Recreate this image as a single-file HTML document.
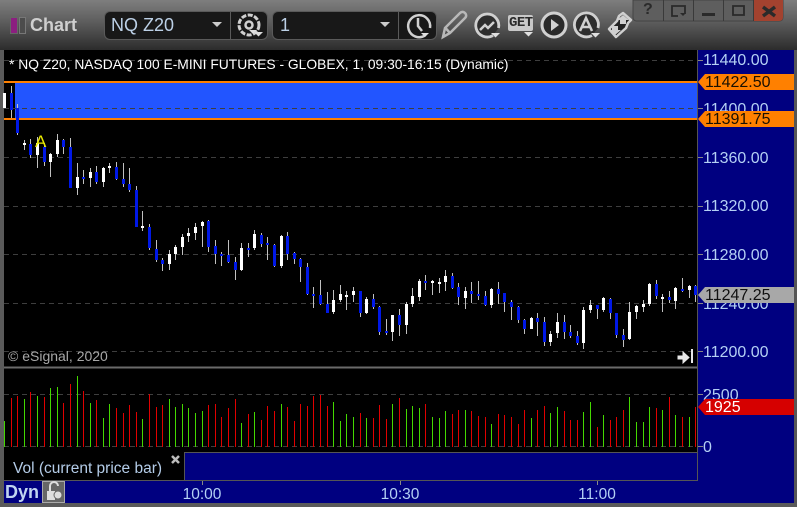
<!DOCTYPE html>
<html><head><meta charset="utf-8"><style>
html,body{margin:0;padding:0;background:#555;width:797px;height:507px;overflow:hidden}
body{position:relative;font-family:"Liberation Sans",sans-serif}
div{position:absolute;white-space:nowrap}
.ax{left:703px;color:#b4d0f4;font-size:16px;line-height:18px}
.tag{left:705px;font-size:16px;line-height:16px}
.tm{color:#b4d0f4;font-size:15.500px;line-height:18px;top:486px;width:60px;text-align:center}
</style></head><body>
<div style="left:0;top:0;width:797px;height:50px;background:linear-gradient(#7e7e7e,#5c5c5c 45%,#2c2c2c)"></div>
<div style="left:0;top:50px;width:4px;height:457px;background:#5a5a5a"></div>
<div style="left:4px;top:50px;width:693px;height:318px;background:#000"></div>
<div style="left:4px;top:368px;width:693px;height:84px;background:#000"></div>
<div style="left:698px;top:50px;width:96px;height:453px;background:#000080"></div>
<div style="left:4px;top:452px;width:181px;height:28px;background:#000"></div>
<div style="left:185px;top:452px;width:513px;height:28px;background:#000080"></div>
<div style="left:4px;top:481px;width:694px;height:22px;background:#000080"></div>
<div style="left:0;top:503px;width:797px;height:4px;background:#5a5a5a"></div>
<div style="left:10px;top:17px;width:6px;height:15px;background:#8c1f80;border:1px solid #666"></div>
<div style="left:19px;top:17px;width:5px;height:15px;background:#4c4c4c;border:1px solid #777"></div>
<div style="left:30px;top:15px;color:#cfcfcf;font-size:18px;font-weight:bold;line-height:20px">Chart</div>
<div style="left:104px;top:11px;width:162px;height:27px;background:#181818;border:1px solid #5a5a5a;border-radius:6px"></div>
<div style="left:272px;top:11px;width:163px;height:27px;background:#181818;border:1px solid #5a5a5a;border-radius:6px"></div>
<div style="left:111px;top:16px;color:#bcd0e6;font-size:18px;line-height:19px">NQ Z20</div>
<div style="left:280px;top:16px;color:#bcd0e6;font-size:18px;line-height:19px">1</div>
<svg width="797" height="507" style="position:absolute;left:0;top:0">
<path d="M230.500 11V39M398.500 11V39" stroke="#5a5a5a"/>
<path d="M212 22h10l-5 5zM380 22h10l-5 5z" fill="#ccc"/>
<g fill="none" stroke="#d0d0d0">
<circle cx="249" cy="25" r="10" stroke-width="3" stroke-dasharray="5 1.500"/><circle cx="249" cy="25" r="3.500" stroke-width="2.500"/>
<path d="M425 35.500A11 11 0 1 1 430 28" stroke-width="2.500"/><path d="M418 18v8l4 5" stroke-width="2.500"/>
<path d="M443 37l2-9 15-15c2-2 4-1 5 0s2 3 0 5L450 33zM445.500 28l4.500 5" stroke="#b8b8b8" stroke-width="2.500"/>
<path d="M493 35.500A11.500 11.500 0 1 1 498.500 28" fill="#2e2e2e" stroke-width="2.800"/><path d="M480 30l5-5 3 3 6-6" stroke-width="2.500"/>
<circle cx="554" cy="25" r="12" fill="#2a2a2a" stroke-width="3"/>
<path d="M592 35.500A12 12 0 1 1 598 28" fill="#2e2e2e" stroke-width="2.800"/><path d="M580 31l6-13 6 13M582.500 27h7" stroke-width="2.500"/>
</g>
<path d="M249 30h8l-4 4zM421 33h8l-4 4zM491 33h9l-4.500 4.500zM524 32h9l-4.500 4.500zM591 33h9l-4.500 4.500z" fill="#e0e0e0"/>
<path d="M254 32h9l-4.500 4.500z" fill="#ddd"/>
<rect x="508" y="15" width="25" height="16" rx="2" fill="#c8c8c8"/>
<path d="M551 19v12l8-6z" fill="#d0d0d0"/>
<path d="M609 29l8-8 2-5 4-3 8 7-3 3-2 5-10 9-7-8z" fill="#222" stroke="#d0d0d0" stroke-width="2.500" stroke-linejoin="round"/>
<path d="M623 15l6 5h-3v4h-6v-4h-3zM615 35l-6-5h3v-4h6v4h3z" fill="#d0d0d0"/>
<path d="M633 0h150v17q0 4-4 4H637q-4 0-4-4z" fill="#5e5e5e" stroke="#444"/>
<path d="M753 0h30v17q0 4-4 4h-26z" fill="#a3422f"/>
<path d="M663.500 0v21M693.500 0v21M723.500 0v21M753.500 0v21" stroke="#3a3a3a"/>
<path d="M685 14V6h-13v10h6M733 6h11v9h-11z" fill="none" stroke="#2a2a2a" stroke-width="1.800"/>
<path d="M702 14.500h13" stroke="#2a2a2a" stroke-width="3"/>
<path d="M763 7l12 9M775 7l-12 9" stroke="#2a2a2a" stroke-width="3.500"/>
<path d="M680 13h6l-3 3z" fill="#2a2a2a"/>
<rect x="15" y="83" width="682" height="35" fill="#2255ff"/>
<path d="M4 82h693M4 119h693" stroke="#ff8000" stroke-width="2"/>
<path d="M4 60.500h693M4 108.500h693M4 157.500h693M4 206.500h693M4 254.500h693M4 303.500h693M4 351.500h693M4 394.500h693M4 446.500h693" stroke="#3e3e3e" stroke-dasharray="5 4"/>
<path d="M11.500 86V118M17.500 104V135M24.500 140V150M30.500 139V158M37.500 137V168M44.500 143V166M50.500 153V177M57.500 134V157M63.500 139V154M70.500 138V188M77.500 163V195M83.500 170V184M90.500 168V187M96.500 166V184M103.500 167V187M109.500 163V173M116.500 162V180M123.500 163V187M129.500 168V192M136.500 186V227M142.500 211V231M149.500 224V250M156.500 240V262M162.500 258V271M169.500 250V270M175.500 245V260M182.500 234V255M188.500 228V242M195.500 223V240M202.500 221V247M208.500 220V252M215.500 240V264M221.500 252V266M228.500 240V263M235.500 257V280M241.500 243V271M248.500 243V257M254.500 230V250M261.500 233V247M267.500 237V260M274.500 244V267M281.500 235V268M287.500 232V260M294.500 252V264M300.500 258V282M307.500 263V295M313.500 287V308M320.500 280V305M327.500 292V313M333.500 290V314M340.500 285V302M346.500 291V310M353.500 287V302M360.500 291V317M366.500 297V314M373.500 294V309M379.500 306V335M386.500 319V335M392.500 315V341M399.500 309V336M406.500 302V334M412.500 288V307M419.500 279V301M425.500 275V290M432.500 280V295M439.500 278V293M445.500 270V291M452.500 273V289M458.500 283V305M465.500 287V309M471.500 282V303M478.500 281V300M485.500 291V306M491.500 288V308M498.500 282V304M504.500 293V312M511.500 300V320M518.500 306V323M524.500 319V334M531.500 317V329M537.500 313V336M544.500 317V346M550.500 331V346M557.500 313V338M564.500 315V339M570.500 325V338M577.500 331V345M583.500 307V349M590.500 300V313M597.500 305V319M603.500 297V312M610.500 298V319M616.500 313V338M623.500 329V347M629.500 302V340M636.500 305V319M643.500 300V312M649.500 283V306M656.500 280V299M662.500 294V312M669.500 291V303M675.500 287V309M682.500 278V292M689.500 285V298M695.500 285V302" stroke="#c0c0c0" fill="none"/>
<path d="M4.500 93V108M37.500 143V155M24.500 143V145M50.500 154V162M57.500 140V154M77.500 177V188M90.500 172V178M103.500 168V182M109.500 166V168M142.500 226V228M169.500 254V264M175.500 247V254M182.500 237V247M188.500 233V236M195.500 227V233M202.500 222V226M241.500 248V270M254.500 234V248M281.500 236V266M333.500 300V312M340.500 294V300M346.500 295V297M353.500 291V295M366.500 299V313M392.500 315V332M406.500 304V325M412.500 296V304M419.500 281V297M432.500 281V283M439.500 282V284M445.500 276V282M465.500 291V298M491.500 289V305M531.500 318V329M550.500 334V342M557.500 322V333M583.500 310V343M590.500 305V310M603.500 298V310M629.500 312V339M636.500 306V312M643.500 304V307M649.500 284V304M662.500 297V299M675.500 288V301M689.500 286V290" stroke="#fff" stroke-width="3" fill="none"/>
<path d="M11.500 93V110M17.500 108V133M30.500 144V155M44.500 147V162M63.500 140V147M70.500 147V188M83.500 177V179M96.500 172V182M116.500 167V179M123.500 179V184M129.500 184V190M136.500 190V227M149.500 227V248M156.500 249V260M162.500 260V264M208.500 221V247M215.500 246V254M221.500 254V256M228.500 255V262M235.500 262V270M248.500 248V250M261.500 235V244M267.500 243V245M274.500 245V266M287.500 236V254M294.500 253V259M300.500 259V267M307.500 267V294M313.500 294V296M320.500 295V304M327.500 304V313M360.500 291V313M373.500 299V307M379.500 307V332M386.500 331V333M399.500 315V325M425.500 281V283M452.500 276V288M458.500 287V297M471.500 291V294M478.500 294V296M485.500 296V305M498.500 289V294M504.500 293V302M511.500 302V307M518.500 307V320M524.500 320V329M537.500 318V322M544.500 322V342M564.500 322V332M570.500 332V336M577.500 336V343M597.500 305V309M610.500 299V313M616.500 313V335M623.500 335V340M656.500 284V296M669.500 297V300M682.500 289V291M695.500 286V295" stroke="#0018e6" stroke-width="3" fill="none"/>
<path d="M11.500 398V447M17.500 396V447M30.500 392V447M44.500 397V447M63.500 403V447M70.500 384V447M83.500 391V447M96.500 400V447M116.500 408V447M123.500 413V447M129.500 405V447M136.500 412V447M149.500 394V447M156.500 407V447M162.500 405V447M208.500 405V447M215.500 404V447M221.500 417V447M228.500 408V447M235.500 399V447M248.500 414V447M261.500 420V447M267.500 406V447M274.500 411V447M287.500 407V447M294.500 421V447M300.500 404V447M307.500 406V447M313.500 396V447M320.500 395V447M327.500 406V447M360.500 413V447M373.500 418V447M379.500 405V447M386.500 419V447M399.500 398V447M425.500 404V447M452.500 414V447M458.500 410V447M471.500 411V447M478.500 416V447M485.500 417V447M498.500 414V447M504.500 415V447M511.500 417V447M518.500 424V447M524.500 410V447M537.500 410V447M544.500 406V447M564.500 411V447M570.500 420V447M577.500 420V447M597.500 427V447M610.500 420V447M616.500 417V447M623.500 410V447M656.500 408V447M669.500 397V447M682.500 417V447M695.500 407V447" stroke="#e00000" fill="none"/>
<path d="M4.500 421V447M24.500 399V447M37.500 396V447M50.500 388V447M57.500 387V447M77.500 376V447M90.500 403V447M103.500 418V447M109.500 404V447M142.500 419V447M169.500 399V447M175.500 407V447M182.500 404V447M188.500 408V447M195.500 413V447M202.500 411V447M241.500 423V447M254.500 412V447M281.500 404V447M333.500 402V447M340.500 421V447M346.500 414V447M353.500 417V447M366.500 418V447M392.500 404V447M406.500 409V447M412.500 406V447M419.500 408V447M432.500 417V447M439.500 418V447M445.500 411V447M465.500 410V447M491.500 424V447M531.500 418V447M550.500 413V447M557.500 407V447M583.500 412V447M590.500 402V447M603.500 415V447M629.500 397V447M636.500 422V447M643.500 422V447M649.500 407V447M662.500 410V447M675.500 415V447M689.500 417V447" stroke="#44d800" fill="none"/>
<path d="M678 356h5v-4l6 5.500-6 5.500v-4h-5z" fill="#e8e8e8" stroke="#e8e8e8"/>
<path d="M692 349v14" stroke="#e8e8e8" stroke-width="2"/>
<path d="M4 367.500h693" stroke="#6a6a6a" stroke-width="2"/>
<path d="M697.500 50V480.500M4 480.500H698M185 452.500H697M184.500 452V480" stroke="#555"/>
<path d="M698 60.500h5M698 108.500h5M698 157.500h5M698 206.500h5M698 254.500h5M698 303.500h5M698 351.500h5M698 394.500h5M698 446.500h5M202.500 481v4M400.500 481v4M597.500 481v4" stroke="#888"/>
</svg>
<div class="ax" style="top:52px">11440.00</div>
<div class="ax" style="top:101px">11400.00</div>
<div class="ax" style="top:150px">11360.00</div>
<div class="ax" style="top:198px">11320.00</div>
<div class="ax" style="top:247px">11280.00</div>
<div class="ax" style="top:296px">11240.00</div>
<div class="ax" style="top:344px">11200.00</div>
<div class="ax" style="top:387px">2500</div>
<div style="left:703px;top:439px;height:13px;overflow:hidden;color:#b4d0f4;font-size:16px;line-height:18px">0</div>
<svg width="797" height="507" style="position:absolute;left:0;top:0">
<path d="M698 82l7-8h89v16h-89z" fill="#ff8000"/>
<path d="M698 119l7-8h89v16h-89z" fill="#ff8000"/>
<path d="M698 295l7-8h89v16h-89z" fill="#a8a8a8"/>
<path d="M698 407l7-8h89v16h-89z" fill="#d60000"/>
<path d="M697.500 50V120M697.500 280V310M697.500 395V420" stroke="#555"/>
<path d="M172 456l7 7M179 456l-7 7" stroke="#bbb" stroke-width="2.500"/>
<rect x="42.500" y="481.500" width="22" height="21" fill="#666" stroke="#aaa"/>
<path d="M50 496v-10a4 4 0 0 1 8 0" fill="none" stroke="#ddd" stroke-width="2"/>
<rect x="47" y="491" width="8" height="9" fill="#ddd"/>
<circle cx="58" cy="495" r="4" fill="#ddd" stroke="#666"/>
</svg>
<div class="tag" style="top:75px;color:#1a1000">11422.50</div>
<div class="tag" style="top:112px;color:#1a1000">11391.75</div>
<div class="tag" style="top:288px;color:#101010">11247.25</div>
<div class="tag" style="top:400px;color:#fff">1925</div>
<div style="left:9px;top:56px;color:#fff;font-size:13.830px;line-height:16px">* NQ Z20, NASDAQ 100 E-MINI FUTURES - GLOBEX, 1, 09:30-16:15 (Dynamic)</div>
<div style="left:35px;top:133px;color:#e8e800;font-size:17px;line-height:18px">A</div>
<div style="left:8px;top:348px;color:#a8a8a8;font-size:14px;line-height:16px">© eSignal, 2020</div>
<div style="left:13px;top:460px;color:#b4cce8;font-size:15.500px;line-height:18px">Vol (current price bar)</div>
<div style="left:5px;top:482px;color:#c0d4f0;font-size:18px;font-weight:bold;line-height:20px">Dyn</div>
<div class="tm" style="left:172px">10:00</div>
<div class="tm" style="left:370px">10:30</div>
<div class="tm" style="left:567px">11:00</div>
<div style="left:509px;top:16px;color:#2a2a2a;font-size:14px;font-weight:bold;font-family:'Liberation Mono',monospace;line-height:14px;transform-origin:0 0;letter-spacing:-.500px">GET</div>
<div style="left:643px;top:1px;color:#2a2a2a;font-size:16px;font-weight:bold;line-height:18px">?</div>
</body></html>
